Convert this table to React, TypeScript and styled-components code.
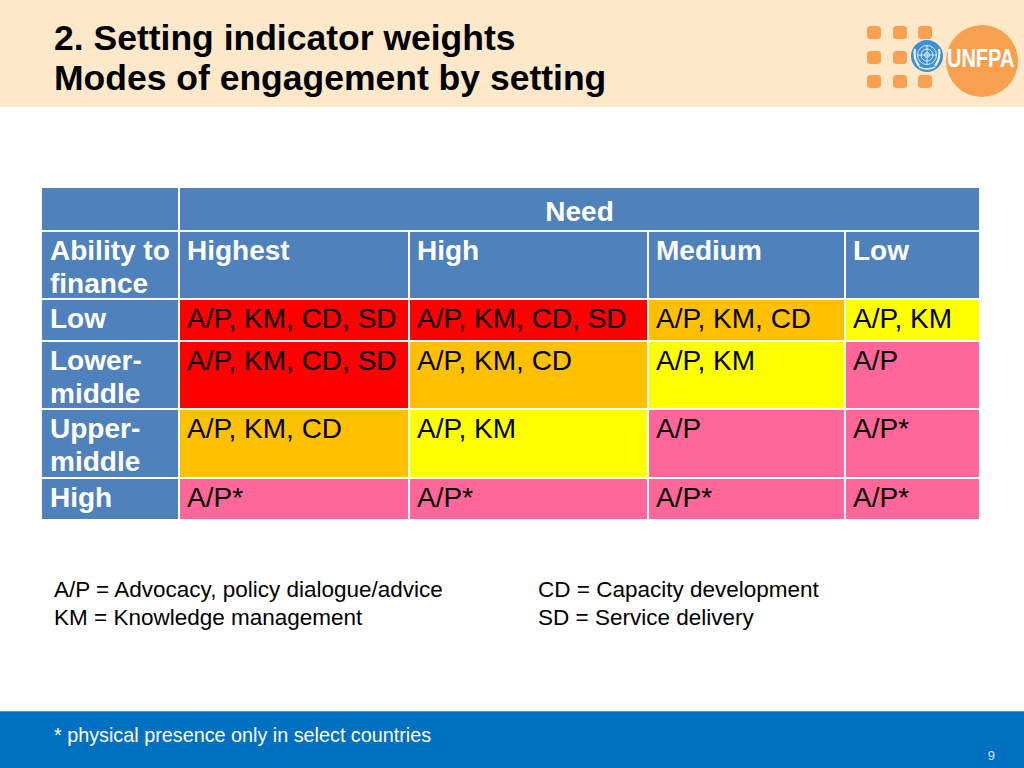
import React from "react";
import styled, { createGlobalStyle } from "styled-components";

const Global = createGlobalStyle`
  html, body { margin: 0; padding: 0; background: #ffffff; }
  body { font-family: "Liberation Sans", Arial, sans-serif; }
`;

const Page = styled.div`
  width: 1024px;
  height: 768px;
  display: flex;
  flex-direction: column;
  overflow: hidden;
  background: #ffffff;
`;

const Header = styled.header`
  height: 107px;
  flex: none;
  background: #fde9c9;
  display: flex;
  justify-content: space-between;
  align-items: flex-start;
  position: relative;
`;

const Title = styled.h1`
  margin: 0;
  padding: 18px 0 0 54px;
  font-size: 35.5px;
  line-height: 40px;
  font-weight: bold;
  color: #000;
`;

const Logo = styled.svg`
  position: absolute;
  right: 0;
  top: 0;
`;

const Main = styled.main`
  flex: 1;
  display: flex;
  flex-direction: column;
  padding: 81px 0 0 42px;
`;

const Grid = styled.div`
  display: grid;
  grid-template-columns: 136px 228px 237px 195px 133px;
  grid-template-rows: 42px 66px 40px 66px 67px 40px;
  gap: 2px;
  width: 937px;
  background: #ffffff;
`;

type Tone = "head" | "red" | "orange" | "yellow" | "pink";
const tones: Record<Tone, string> = {
  head: "#4f81bd",
  red: "#ff0000",
  orange: "#ffc000",
  yellow: "#ffff00",
  pink: "#ff6699",
};

const Cell = styled.div<{ $tone: Tone; $span?: number; $center?: boolean }>`
  background: ${(p) => tones[p.$tone]};
  grid-column: ${(p) => (p.$span ? `span ${p.$span}` : "auto")};
  color: ${(p) => (p.$tone === "head" ? "#ffffff" : "#000000")};
  font-weight: ${(p) => (p.$tone === "head" ? "bold" : "normal")};
  font-size: 28px;
  line-height: 33px;
  padding: 2px 0 0 7px;
  text-align: ${(p) => (p.$center ? "center" : "left")};
  white-space: nowrap;
  overflow: hidden;
`;

const NeedCell = styled(Cell)`
  padding-top: 7px;
  padding-left: 0;
`;

const RowHead = styled(Cell)`
  padding-left: 8px;
`;

const Legend = styled.div`
  display: grid;
  grid-template-columns: 484px auto;
  margin: 57px 0 0 12px;
  font-size: 22.5px;
  line-height: 28px;
  color: #000;
`;

const Footer = styled.footer`
  height: 57px;
  flex: none;
  background: #0070c0;
  border-top: 1px solid #4a97d2;
  display: flex;
  justify-content: space-between;
  align-items: flex-start;
  color: #ffffff;
  box-sizing: border-box;
`;

const Note = styled.div`
  padding: 11px 0 0 54px;
  font-size: 19.8px;
  line-height: 24px;
`;

const PageNum = styled.div`
  padding: 36px 29px 0 0;
  font-size: 13px;
  line-height: 16px;
  color: #d8e8f5;
`;

const rows: { label: string; cells: [Tone, string][] }[] = [
  {
    label: "Low",
    cells: [
      ["red", "A/P, KM, CD, SD"],
      ["red", "A/P, KM, CD, SD"],
      ["orange", "A/P, KM, CD"],
      ["yellow", "A/P, KM"],
    ],
  },
  {
    label: "Lower-\nmiddle",
    cells: [
      ["red", "A/P, KM, CD, SD"],
      ["orange", "A/P, KM, CD"],
      ["yellow", "A/P, KM"],
      ["pink", "A/P"],
    ],
  },
  {
    label: "Upper-\nmiddle",
    cells: [
      ["orange", "A/P, KM, CD"],
      ["yellow", "A/P, KM"],
      ["pink", "A/P"],
      ["pink", "A/P*"],
    ],
  },
  {
    label: "High",
    cells: [
      ["pink", "A/P*"],
      ["pink", "A/P*"],
      ["pink", "A/P*"],
      ["pink", "A/P*"],
    ],
  },
];

const Square = ({ x, y }: { x: number; y: number }) => (
  <rect x={x} y={y} width={14} height={13} rx={3.5} fill="#f7a150" />
);

const UnfpaLogo = () => (
  <Logo width={164} height={107} viewBox="860 0 164 107">
    {[867, 893, 918].map((x) =>
      [26, 51, 75].map((y) =>
        x === 918 && y === 51 ? null : <Square key={`${x}-${y}`} x={x} y={y} />
      )
    )}
    <circle cx={982} cy={61} r={36} fill="#f7a150" />
    <circle cx={927} cy={56} r={16} fill="#3d8fd6" />
    <g fill="none" stroke="#ffffff" strokeWidth={0.9} opacity={0.9}>
      <circle cx={927} cy={55} r={9.5} />
      <circle cx={927} cy={55} r={6} />
      <circle cx={927} cy={55} r={2.5} />
      <line x1={917.5} y1={55} x2={936.5} y2={55} />
      <line x1={927} y1={45.5} x2={927} y2={64.5} />
      <path d="M915 49 Q913 58 919 66 M939 49 Q941 58 935 66" strokeWidth={2.2} />
      <path d="M919 67 Q927 71 935 67" strokeWidth={1.5} />
    </g>
    <text
      transform="translate(947 67) scale(1 1.33)"
      fill="#ffffff"
      fontFamily="'Liberation Sans', Arial, sans-serif"
      fontWeight="bold"
      fontSize={20}
    >
      UNFPA
    </text>
  </Logo>
);

export default function App() {
  return (
    <Page>
      <Global />
      <Header>
        <Title>
          2. Setting indicator weights
          <br />
          Modes of engagement by setting
        </Title>
        <UnfpaLogo />
      </Header>
      <Main>
        <Grid>
          <Cell $tone="head" />
          <NeedCell $tone="head" $span={4} $center>
            Need
          </NeedCell>
          <RowHead $tone="head">
            Ability to
            <br />
            finance
          </RowHead>
          <Cell $tone="head">Highest</Cell>
          <Cell $tone="head">High</Cell>
          <Cell $tone="head">Medium</Cell>
          <Cell $tone="head">Low</Cell>
          {rows.map((r) => (
            <React.Fragment key={r.label}>
              <RowHead $tone="head">
                {r.label.split("\n").map((l, i) => (
                  <React.Fragment key={i}>
                    {i > 0 && <br />}
                    {l}
                  </React.Fragment>
                ))}
              </RowHead>
              {r.cells.map(([tone, text], i) => (
                <Cell key={i} $tone={tone}>
                  {text}
                </Cell>
              ))}
            </React.Fragment>
          ))}
        </Grid>
        <Legend>
          <div>A/P = Advocacy, policy dialogue/advice</div>
          <div>CD = Capacity development</div>
          <div>KM = Knowledge management</div>
          <div>SD = Service delivery</div>
        </Legend>
      </Main>
      <Footer>
        <Note>* physical presence only in select countries</Note>
        <PageNum>9</PageNum>
      </Footer>
    </Page>
  );
}
